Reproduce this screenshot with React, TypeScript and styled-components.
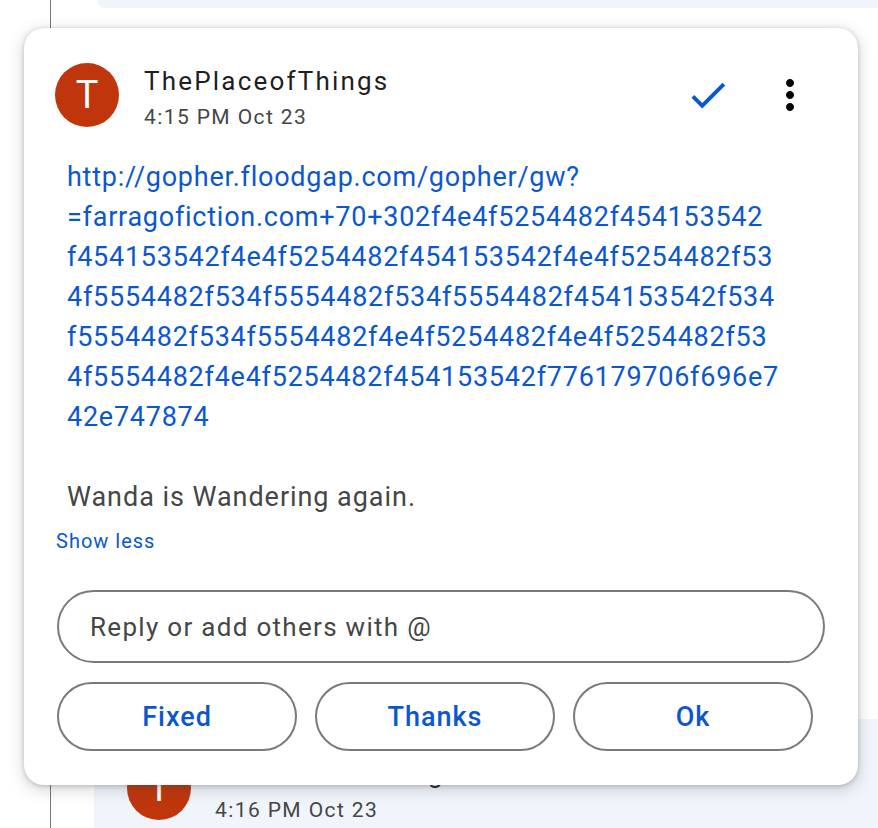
import React from 'react';
import styled, { createGlobalStyle } from 'styled-components';

const GlobalStyle = createGlobalStyle`
    html, body {
        margin: 0;
        padding: 0;
        background: #ffffff;
    }
    body {
        font-family: Roboto, "Noto Sans", Arial, sans-serif;
        color: #1f1f1f;
    }
`;

const Page = styled.div`
    position: relative;
    width: 878px;
    height: 828px;
    overflow: hidden;
    display: flex;
    background: #ffffff;
`;

// thread underneath the popup
const Thread = styled.div`
    flex: 1;
    margin-left: 50px;
    padding-left: 43px;
    border-left: 1px solid #757575;
    display: flex;
    flex-direction: column;
    justify-content: space-between;
`;

const TopCard = styled.div`
    height: 8px;
    margin-left: 3px;
    background: #f0f4fb;
    border-radius: 0 0 0 16px;
`;

const BottomCard = styled.div`
    height: 109px;
    box-sizing: border-box;
    padding: 37px 0 0 35px;
    background: #f0f4fb;
    border-radius: 16px 0 0 0;
    display: flex;
    gap: 24px;
    align-items: flex-start;
`;

const Popup = styled.div`
    position: absolute;
    left: 24px;
    top: 28px;
    width: 834px;
    box-sizing: border-box;
    padding: 35px 33px 34px 33px;
    background: #ffffff;
    border-radius: 20px;
    box-shadow: 0 4px 14px 3px rgba(60, 64, 67, 0.16), 0 1px 4px rgba(60, 64, 67, 0.28);
`;

const Header = styled.div`
    display: flex;
    align-items: flex-start;
`;

const Avatar = styled.div`
    width: 64px;
    height: 64px;
    flex: none;
    border-radius: 50%;
    background: #bf360c;
    color: #ffffff;
    font-size: 38px;
    line-height: 64px;
    text-align: center;
    margin-left: -2px;
`;

const Meta = styled.div`
    flex: 1;
    margin-left: 25px;
`;

const Name = styled.div`
    font-size: 26px;
    line-height: 36px;
    letter-spacing: 2.2px;
    color: #1f1f1f;
    white-space: nowrap;
`;

const Time = styled.div`
    font-size: 21px;
    line-height: 30px;
    margin-top: 3px;
    letter-spacing: 1.4px;
    color: #444746;
`;

const Actions = styled.div`
    display: flex;
    gap: 34px;
    margin-top: 8px;
    margin-right: 11px;
`;

const IconButton = styled.div`
    width: 48px;
    height: 48px;
    display: flex;
    align-items: center;
    justify-content: center;
`;

const Body = styled.div`
    margin-top: 25px;
    padding-left: 10px;
    font-size: 27px;
    line-height: 40px;
    letter-spacing: 0.75px;
`;

const Link = styled.a`
    color: #0b57d0;
    text-decoration: none;
    display: block;
`;

const Message = styled.div`
    margin-top: 40px;
    color: #444746;
    letter-spacing: 0.95px;
`;

const ShowLess = styled.div`
    margin-top: 10px;
    margin-left: -1px;
    font-size: 20px;
    line-height: 28px;
    letter-spacing: 1px;
    color: #0b57d0;
`;

const ReplyBox = styled.div`
    margin-top: 35px;
    height: 73px;
    box-sizing: border-box;
    border: 2px solid #7a7a7a;
    border-radius: 37px;
    display: flex;
    align-items: center;
    padding-left: 31px;
    font-size: 26px;
    letter-spacing: 1.3px;
    color: #444746;
`;

const QuickReplies = styled.div`
    display: flex;
    gap: 18px;
    margin-top: 19px;
`;

const QuickButton = styled.div`
    width: 240px;
    height: 69px;
    box-sizing: border-box;
    border: 2px solid #7a7a7a;
    border-radius: 35px;
    display: flex;
    align-items: center;
    justify-content: center;
    font-size: 27px;
    font-weight: 500;
    letter-spacing: 1px;
    color: #0b57d0;
`;

const linkLines = [
    'http://gopher.floodgap.com/gopher/gw?',
    '=farragofiction.com+70+302f4e4f5254482f454153542',
    'f454153542f4e4f5254482f454153542f4e4f5254482f53',
    '4f5554482f534f5554482f534f5554482f454153542f534',
    'f5554482f534f5554482f4e4f5254482f4e4f5254482f53',
    '4f5554482f4e4f5254482f454153542f776179706f696e7',
    '42e747874',
];

const CheckIcon = () => (
    <svg width="46" height="46" viewBox="0 0 24 24">
        <path fill="#0b57d0" d="M9 16.17L4.83 12l-1.42 1.41L9 19 21 7l-1.41-1.41z" />
    </svg>
);

const MoreIcon = () => (
    <svg width="48" height="48" viewBox="0 0 24 24">
        <path
            fill="#000000"
            d="M12 8c1.1 0 2-.9 2-2s-.9-2-2-2-2 .9-2 2 .9 2 2 2zm0 2c-1.1 0-2 .9-2 2s.9 2 2 2 2-.9 2-2-.9-2-2-2zm0 6c-1.1 0-2 .9-2 2s.9 2 2 2 2-.9 2-2-.9-2-2-2z"
        />
    </svg>
);

const App = () => {
    return (
        <Page>
            <GlobalStyle />
            <Thread>
                <TopCard />
                <BottomCard>
                    <Avatar>T</Avatar>
                    <div>
                        <Name>ThePlaceofThings</Name>
                        <Time>4:16 PM Oct 23</Time>
                    </div>
                </BottomCard>
            </Thread>

            <Popup>
                <Header>
                    <Avatar>T</Avatar>
                    <Meta>
                        <Name>ThePlaceofThings</Name>
                        <Time>4:15 PM Oct 23</Time>
                    </Meta>
                    <Actions>
                        <IconButton><CheckIcon /></IconButton>
                        <IconButton><MoreIcon /></IconButton>
                    </Actions>
                </Header>

                <Body>
                    <Link href="#">
                        {linkLines.map(l => (
                            <span key={l}>{l}<br /></span>
                        ))}
                    </Link>
                    <Message>Wanda is Wandering again.</Message>
                </Body>
                <ShowLess>Show less</ShowLess>

                <ReplyBox>Reply or add others with @</ReplyBox>
                <QuickReplies>
                    <QuickButton>Fixed</QuickButton>
                    <QuickButton>Thanks</QuickButton>
                    <QuickButton>Ok</QuickButton>
                </QuickReplies>
            </Popup>
        </Page>
    );
};

export default App;
